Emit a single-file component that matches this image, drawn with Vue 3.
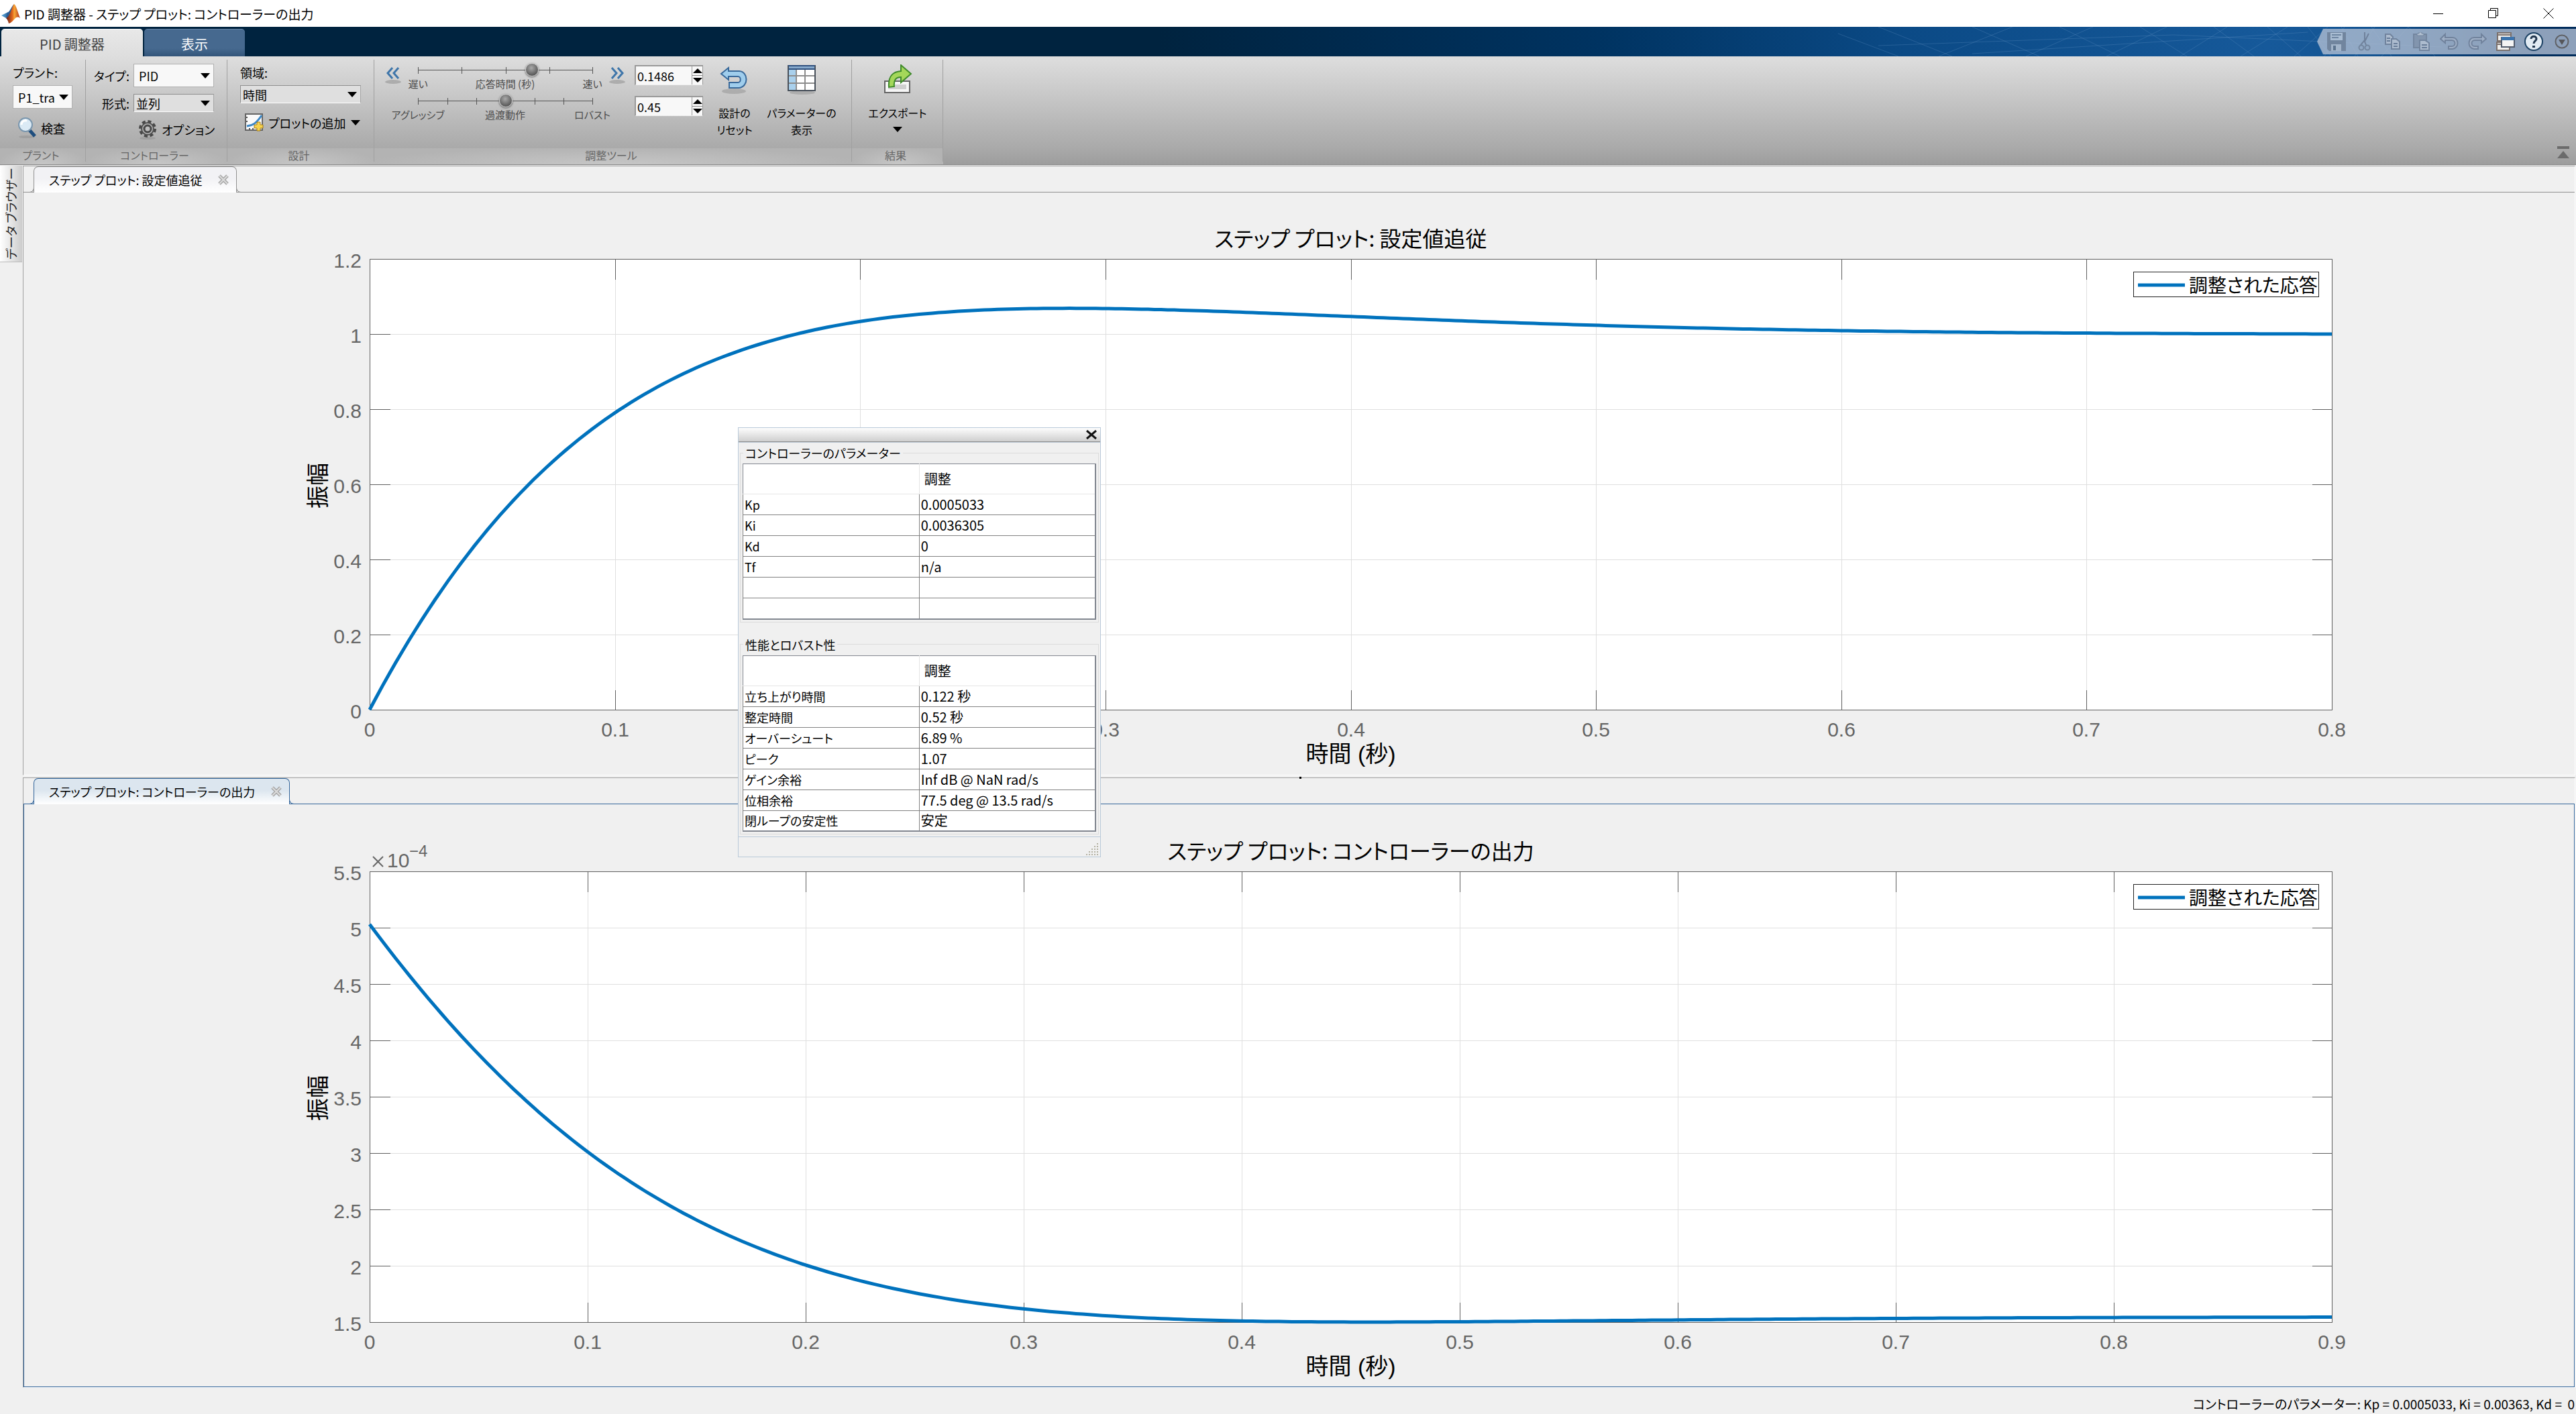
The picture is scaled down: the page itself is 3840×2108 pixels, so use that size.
<script setup>
import { ref } from 'vue'

const plant = ref('P1_tra')
const controllerType = ref('PID')
const form = ref('並列')
const domain = ref('時間')
const responseTime = ref('0.1486')
const transient = ref('0.45')
const responseSlider = ref(655)
const transientSlider = ref(502)

const gains = [
  ['Kp', '0.0005033'],
  ['Ki', '0.0036305'],
  ['Kd', '0'],
  ['Tf', 'n/a'],
  ['', ''],
  ['', '']
]
const performance = [
  ['立ち上がり時間', '0.122 秒'],
  ['整定時間', '0.52 秒'],
  ['オーバーシュート', '6.89 %'],
  ['ピーク', '1.07'],
  ['ゲイン余裕', 'Inf dB @ NaN rad/s'],
  ['位相余裕', '77.5 deg @ 13.5 rad/s'],
  ['閉ループの安定性', '安定']
]
const tables = [
  { title: 'コントローラーのパラメーター', rows: gains },
  { title: '性能とロバスト性', rows: performance }
]

// Closed loop of a first-order plant with the tuned PI controller
const sigma = 8.09
const wd = 4.89
const b = -0.877
const tau = 0.263
const uFinal = 1.545
const output = t => 1 - Math.exp(-sigma * t) * (Math.cos(wd * t) + b * Math.sin(wd * t))
const slope = t => Math.exp(-sigma * t) *
  ((sigma - b * wd) * Math.cos(wd * t) + (sigma * b + wd) * Math.sin(wd * t))
const control = t => (tau * slope(t) + output(t)) * uFinal

function makeChart(o) {
  const { left, right, top, bottom, xMax, yMin, yMax } = o
  const px = t => left + (right - left) * t / xMax
  const py = v => bottom - (bottom - top) * (v - yMin) / (yMax - yMin)
  const points = []
  for (let i = 0; i <= 300; i++) {
    const t = xMax * i / 300
    points.push(px(t).toFixed(1) + ',' + py(o.fn(t)).toFixed(1))
  }
  const xTicks = []
  for (let i = 0; i <= Math.round(xMax * 10); i++) {
    xTicks.push({ pos: Math.round(px(i / 10)), label: String(i / 10) })
  }
  const yTicks = []
  const n = Math.round((yMax - yMin) / o.yStep)
  for (let i = 0; i <= n; i++) {
    const v = Math.round((yMin + i * o.yStep) * 10) / 10
    yTicks.push({ pos: Math.round(py(v)), label: String(v) })
  }
  return { ...o, points: points.join(' '), xTicks, yTicks, mid: (left + right) / 2, midY: (top + bottom) / 2 }
}

const panels = [
  {
    tab: 'ステップ プロット: 設定値追従', active: false,
    chart: makeChart({ width: 3803, left: 516, right: 3441, top: 99, bottom: 771, xMax: 0.8, yMin: 0, yMax: 1.2, yStep: 0.2, fn: output, title: 'ステップ プロット: 設定値追従' })
  },
  {
    tab: 'ステップ プロット: コントローラーの出力', active: true,
    chart: makeChart({ width: 3801, left: 515, right: 3440, top: 100, bottom: 772, xMax: 0.9, yMin: 1.5, yMax: 5.5, yStep: 0.5, fn: control, title: 'ステップ プロット: コントローラーの出力', exponent: true })
  }
]
</script>

<template>
  <div class="app">
    <header class="titlebar">
      <svg class="logo" viewBox="0 0 28 30" aria-hidden="true">
        <defs>
          <linearGradient id="lg1" x1="0" x2="1"><stop offset="0" stop-color="#5aa9dd" /><stop offset="1" stop-color="#1f4f86" /></linearGradient>
          <linearGradient id="lg2" x1="0" x2="1"><stop offset="0" stop-color="#5b1a1a" /><stop offset=".45" stop-color="#e0661c" /><stop offset=".6" stop-color="#f7a637" /><stop offset="1" stop-color="#a82a16" /></linearGradient>
        </defs>
        <path d="M0 18L9 13.500L14 16.500L8 22.500Z" fill="url(#lg1)" />
        <path d="M9 13.500C13 13 15 4 19 1L15 14L10 21L7 20Z" fill="#2b5d96" />
        <path d="M19 1C22 2 25 15 28 22C25 20 23 20 20 23C17 26 15 29 11 30C10 26 9 24 7 22C13 20 15 6 19 1Z" fill="url(#lg2)" />
      </svg>
      <h1>PID 調整器 - ステップ プロット: コントローラーの出力</h1>
      <div class="window-buttons">
        <button aria-label="最小化"><svg viewBox="0 0 16 16"><path d="M0 8.500H15" stroke="#000" /></svg></button>
        <button aria-label="元に戻す"><svg viewBox="0 0 16 16"><path d="M.5 3.500H11.500V14.500H.5ZM3.500 3.500V.5H14.500V11.500H11.500" fill="none" stroke="#000" /></svg></button>
        <button aria-label="閉じる"><svg viewBox="0 0 16 16"><path d="M.5 .5L15.500 15.500M15.500 .5L.5 15.500" stroke="#000" /></svg></button>
      </div>
    </header>

    <nav class="tabstrip">
      <button class="tab current">PID 調整器</button>
      <button class="tab">表示</button>
      <svg class="mesh" viewBox="0 0 1100 44" preserveAspectRatio="xMaxYMid slice" aria-hidden="true">
        <path d="M0 10L90 44M60 0L170 44M150 44L260 0M200 0L300 44M280 44L380 0M330 0L420 44M400 44L490 0M450 0L520 44M510 44L580 0M560 0L620 44M600 44L670 0M640 0L690 44M680 44L730 0M700 0L735 44M725 44L755 0M750 0L775 44M770 44L800 0M795 0L825 44M810 44L850 0M850 0L890 44M60 28L500 12L900 30M200 40L700 8" fill="none" stroke="#6d9cc8" stroke-opacity=".28" />
      </svg>
      <div class="quick">
        <button disabled aria-label="保存"><svg viewBox="0 0 28 28"><path d="M0 0H28V28H3L0 25Z" fill="#71859e" /><path d="M5 1H23V12H5Z" fill="#a9bdd3" /><path d="M7 4H21M7 8H17" stroke="#6f86a2" stroke-width="2" /><path d="M6 18H21V28H6Z" fill="#a2b4c9" /><path d="M9 20H13V27H9Z" fill="#5d748f" /></svg></button>
        <button disabled aria-label="切り取り"><svg viewBox="0 0 28 28"><path d="M14 0V12L8 19M20 2L14 14L16 19" fill="none" stroke="#6f819b" stroke-width="2" /><circle cx="9" cy="23" r="3.500" fill="none" stroke="#73869f" stroke-width="2" /><circle cx="18" cy="23" r="3.500" fill="none" stroke="#73869f" stroke-width="2" /></svg></button>
        <button disabled aria-label="コピー"><svg viewBox="0 0 28 28"><g fill="#adbccf" stroke="#71849e" stroke-width="2"><path d="M3 3H10L14 7V18H3Z" /><path d="M12 10H19L24 14V25H12Z" /></g><path d="M5 9H10M5 13H10M15 17H21M15 21H21" stroke="#677c98" stroke-width="2" /></svg></button>
        <button disabled aria-label="貼り付け"><svg viewBox="0 0 28 28"><path d="M3 3H22V23H3Z" fill="#8295ae" stroke="#73869f" stroke-width="2" /><path d="M8 5V2H11V0H15V2H18V5Z" fill="#b3c1d2" stroke="#71849e" /><path d="M12 12H20L26 16V27H12Z" fill="#adbccf" stroke="#71849e" stroke-width="2" /><path d="M15 19H23M15 23H23" stroke="#677c98" stroke-width="2" /></svg></button>
        <button disabled aria-label="元に戻す"><svg viewBox="0 0 28 28"><path d="M8 3L1 10L8 16V12H18C24 12 24 21 18 21H13V25H19C29 24 29 8 19 8H8Z" fill="#a0b0c6" stroke="#71839d" stroke-width="2" /></svg></button>
        <button disabled aria-label="やり直し"><svg viewBox="0 0 28 28"><path d="M20 3L27 10L20 16V12H10C4 12 4 21 10 21H15V25H9C-1 24 -1 8 9 8H20Z" fill="#a0b0c6" stroke="#71839d" stroke-width="2" /></svg></button>
        <button aria-label="ウィンドウの切り替え"><svg viewBox="0 0 28 28"><path d="M2 1H22V13H2ZM1 15H20V27H1Z" fill="#f0efed" stroke="#7b716d" stroke-width="2" /><path d="M2 4H22M1 18H20" stroke="#7b716d" stroke-width="2" /><path d="M8 8H27V22H8Z" fill="#f4f4f4" stroke="#525c6c" stroke-width="2" /><path d="M8 7H27V12H8Z" fill="#3c74ad" /></svg></button>
        <button aria-label="ヘルプ"><svg viewBox="0 0 28 28"><circle cx="14" cy="14" r="13" fill="#e2ebf3" stroke="#1e4365" stroke-width="2" /><path d="M10 10C10 5 18 5 18 10C18 13 14 13 14 17" fill="none" stroke="#22374f" stroke-width="3" /><path d="M12 20H16V23H12Z" fill="#22374f" /></svg></button>
        <button aria-label="クイック アクセス"><svg viewBox="0 0 28 28"><circle cx="14" cy="14" r="9.500" fill="none" stroke="#5f6064" stroke-width="2" /><path d="M9 11H19L14 19Z" fill="#55565a" /></svg></button>
      </div>
    </nav>

    <div class="toolstrip">
      <section class="group plant">
        <div class="body stack">
          <label for="plant">プラント:</label>
          <div class="combo tall"><select id="plant" v-model="plant"><option>P1_tra</option></select></div>
          <button class="tool">
            <svg class="icon" viewBox="0 0 28 32"><ellipse cx="14" cy="29" rx="12" ry="2" fill="#888" opacity=".4" /><path d="M17 18L26 28" stroke="#1f4e7e" stroke-width="5" /><circle cx="12" cy="11" r="10" fill="#dbeaf5" stroke="#7b97ae" stroke-width="2" /><path d="M6 11C6 6 10 4 14 5" fill="none" stroke="#fff" stroke-width="3" /></svg>
            検査
          </button>
        </div>
        <h2>プラント</h2>
      </section>

      <section class="group controller">
        <div class="body fields">
          <label for="type">タイプ:</label>
          <div class="combo tall"><select id="type" v-model="controllerType"><option>PID</option></select></div>
          <label for="form">形式:</label>
          <div class="combo flat"><select id="form" v-model="form"><option>並列</option></select></div>
          <button class="tool wide">
            <svg class="icon" viewBox="0 0 28 32"><ellipse cx="14" cy="29" rx="12" ry="2" fill="#888" opacity=".4" /><circle cx="14" cy="15" r="11" fill="none" stroke="#484848" stroke-width="4" stroke-dasharray="5 3.640" /><circle cx="14" cy="15" r="9" fill="#b5b5b5" stroke="#505050" stroke-width="2" /><circle cx="14" cy="15" r="5" fill="#bdbdbd" stroke="#484848" stroke-width="3" /></svg>
            オプション
          </button>
        </div>
        <h2>コントローラー</h2>
      </section>

      <section class="group design">
        <div class="body stack">
          <label for="domain">領域:</label>
          <div class="combo flat"><select id="domain" v-model="domain"><option>時間</option></select></div>
          <button class="tool">
            <svg class="icon" viewBox="0 0 28 32"><path d="M1 3H26V27H1Z" fill="#fafafa" stroke="#666" stroke-width="2" /><path d="M3 21C12 20 17 17 25 5" fill="none" stroke="#3d88c6" stroke-width="3" /><path d="M2 8H4M2 14H4M7 26V24M12 26V24" stroke="#555" stroke-width="2" /><path d="M18 15H23V19H27V24H23V28H18V24H14V19H18Z" fill="#f6d34e" stroke="#a27b18" /></svg>
            プロットの追加 <i class="caret"></i>
          </button>
        </div>
        <h2>設計</h2>
      </section>

      <section class="group tuning">
        <div class="body row">
          <div class="sliders">
            <div class="slider-row">
              <button class="step" aria-label="遅くする"><svg viewBox="0 0 28 28"><ellipse cx="14" cy="23" rx="12" ry="3" fill="#777" opacity=".4" /><path d="M13 2L6 10L13 18M22 2L15 10L22 18" fill="none" stroke="#3f76aa" stroke-width="3" /></svg></button>
              <div class="slider">
                <div class="range">
                  <svg viewBox="0 0 281 24" class="scale"><path d="M10 12.500H271M10.500 8V18M75.500 8V18M141.500 8V18M206.500 8V18M270.500 8V18" /></svg>
                  <input v-model="responseSlider" type="range" min="0" max="1000" aria-label="応答時間 (秒)">
                </div>
                <div class="captions"><span>遅い</span><span>応答時間 (秒)</span><span>速い</span></div>
              </div>
              <button class="step" aria-label="速くする"><svg viewBox="0 0 28 28"><ellipse cx="14" cy="23" rx="12" ry="3" fill="#777" opacity=".4" /><path d="M6 2L13 10L6 18M15 2L22 10L15 18" fill="none" stroke="#3f76aa" stroke-width="3" /></svg></button>
            </div>
            <div class="slider">
              <div class="range">
                <svg viewBox="0 0 281 24" class="scale"><path d="M10 12.500H271M10.500 8V18M54.500 8V18M97.500 8V18M184.500 8V18M227.500 8V18M270.500 8V18" /></svg>
                <input v-model="transientSlider" type="range" min="0" max="1000" aria-label="過渡動作">
              </div>
              <div class="captions"><span>アグレッシブ</span><span>過渡動作</span><span>ロバスト</span></div>
            </div>
          </div>
          <div class="spinners">
            <div class="spinner">
              <input v-model="responseTime" type="text" aria-label="応答時間">
              <div class="arrows"><button aria-label="増やす"><i class="up"></i></button><button aria-label="減らす"><i class="down"></i></button></div>
            </div>
            <div class="spinner">
              <input v-model="transient" type="text" aria-label="過渡動作">
              <div class="arrows"><button aria-label="増やす"><i class="up"></i></button><button aria-label="減らす"><i class="down"></i></button></div>
            </div>
          </div>
          <button class="big reset">
            <svg viewBox="0 0 46 46"><ellipse cx="22" cy="40" rx="18" ry="4" fill="#777" opacity=".35" /><path d="M14 5L3 14L14 23V18H28C33 18 33 27 28 27H15V35H30C44 33 44 11 30 10H14Z" fill="#9fcdec" stroke="#39699a" stroke-width="2" /></svg>
            設計の<br>リセット
          </button>
          <button class="big params">
            <svg viewBox="0 0 46 46"><ellipse cx="24" cy="42" rx="19" ry="3" fill="#777" opacity=".35" /><path d="M4 2H42V39H4Z" fill="#fff" /><path d="M4 2H14V39H4Z" fill="#a9d0ec" /><path d="M4 17H42M4 28H42M15 7V39M28 7V39" stroke="#8d8d8d" stroke-width="2" /><path d="M4 2H42V7H4Z" fill="#86a9cc" /><path d="M3 2H43V39H3Z" fill="none" stroke="#48505a" stroke-width="2" /><path d="M3 2H43M3 7H43" stroke="#2f507e" stroke-width="2" /></svg>
            パラメーターの<br>表示
          </button>
        </div>
        <h2>調整ツール</h2>
      </section>

      <section class="group result">
        <div class="body row">
          <button class="big export">
            <svg viewBox="0 0 46 46"><path d="M4 25H41V42H4Z" fill="#f6f6f6" stroke="#666" stroke-width="2" /><path d="M9 30H36V37H9Z" fill="#cfcfcf" /><path d="M10 34C9 19 14 11 28 10V1L43 14L28 27V19C20 19 17 24 18 33Z" fill="#a4d75a" stroke="#3f8a2b" stroke-width="2" /></svg>
            エクスポート
            <i class="caret"></i>
          </button>
        </div>
        <h2>結果</h2>
      </section>
      <button class="collapse" aria-label="ツールストリップの最小化"><svg viewBox="0 0 18 18"><path d="M0 0H18V4H0ZM9 7L18 18H0Z" fill="#6b6b6b" /></svg></button>
    </div>

    <main class="workspace">
      <aside><button class="browser">データ ブラウザー</button></aside>
      <div class="documents">
        <section v-for="p in panels" :key="p.tab" class="panel" :class="{ active: p.active }">
          <div class="doc-tabs">
            <div class="doc-tab">
              <span>{{ p.tab }}</span>
              <button aria-label="閉じる"><svg viewBox="0 0 16 16"><path d="M2 2L14 14M14 2L2 14" stroke="#a6a6a6" stroke-width="5" /><path d="M2 2L14 14M14 2L2 14" stroke="#dcdcdc" stroke-width="2" /></svg></button>
            </div>
          </div>
          <div class="doc-body">
            <svg class="chart" :viewBox="`0 0 ${p.chart.width} 868`" role="img" :aria-label="p.chart.title">
              <rect :x="p.chart.left" :y="p.chart.top" :width="p.chart.right - p.chart.left" :height="p.chart.bottom - p.chart.top" fill="#fff" />
              <g transform="translate(0.5 0.5)" shape-rendering="crispEdges">
                <g class="grid">
                  <line v-for="t in p.chart.xTicks" :key="'x' + t.label" :x1="t.pos" :x2="t.pos" :y1="p.chart.top" :y2="p.chart.bottom" />
                  <line v-for="t in p.chart.yTicks" :key="'y' + t.label" :x1="p.chart.left" :x2="p.chart.right" :y1="t.pos" :y2="t.pos" />
                </g>
                <g class="axis">
                  <rect :x="p.chart.left" :y="p.chart.top" :width="p.chart.right - p.chart.left" :height="p.chart.bottom - p.chart.top" />
                  <path v-for="t in p.chart.xTicks" :key="'tx' + t.label" :d="`M${t.pos} ${p.chart.top}v30M${t.pos} ${p.chart.bottom}v-30`" />
                  <path v-for="t in p.chart.yTicks" :key="'ty' + t.label" :d="`M${p.chart.left} ${t.pos}h30M${p.chart.right} ${t.pos}h-30`" />
                </g>
              </g>
              <polyline class="curve" :points="p.chart.points" />
              <g class="ticks" text-anchor="middle">
                <text v-for="t in p.chart.xTicks" :key="t.label" :x="t.pos" :y="p.chart.bottom + 40">{{ t.label }}</text>
              </g>
              <g class="ticks" text-anchor="end">
                <text v-for="t in p.chart.yTicks" :key="t.label" :x="p.chart.left - 12" :y="t.pos + 13">{{ t.label }}</text>
              </g>
              <g v-if="p.chart.exponent" class="ticks">
                <path :d="`M${p.chart.left + 5} ${p.chart.top - 22}l15 15m0 -15l-15 15`" fill="none" stroke="#666" stroke-width="2" />
                <text :x="p.chart.left + 26" :y="p.chart.top - 6">10</text>
                <text class="power" :x="p.chart.left + 59" :y="p.chart.top - 22">−4</text>
              </g>
              <text class="name" text-anchor="middle" :x="p.chart.mid" :y="p.chart.top - 18">{{ p.chart.title }}</text>
              <g class="axis-name" text-anchor="middle">
                <text :x="p.chart.mid" :y="p.chart.bottom + 78">時間 (秒)</text>
                <text :transform="`translate(${p.chart.left - 65} ${p.chart.midY + 2}) rotate(-90)`">振幅</text>
              </g>
              <g :transform="`translate(${p.chart.right - 296} ${p.chart.top + 19})`">
                <rect x="0.5" y="0.5" width="276" height="37" fill="#fff" stroke="#222" />
                <path class="curve" d="M7 20H77" />
                <text class="legend" x="83" y="31">調整された応答</text>
              </g>
            </svg>
          </div>
        </section>
        <i class="splitter"></i>
      </div>

      <div class="dialog" role="dialog" aria-label="コントローラーのパラメーター">
        <div class="dialog-bar"><button aria-label="閉じる"><svg viewBox="0 0 16 14"><path d="M1 1L15 13M15 1L1 13" stroke="#111" stroke-width="3" /></svg></button></div>
        <div class="dialog-content">
          <fieldset v-for="t in tables" :key="t.title">
            <legend>{{ t.title }}</legend>
            <table>
              <thead><tr><th></th><th>調整</th></tr></thead>
              <tbody><tr v-for="(r, i) in t.rows" :key="i"><td>{{ r[0] }}</td><td>{{ r[1] }}</td></tr></tbody>
            </table>
          </fieldset>
        </div>
        <div class="dialog-foot"><svg viewBox="0 0 20 20"><path d="M16 2h2M12 6h6M8 10h10M4 14h14M0 18h18" stroke="#b5b3a4" stroke-width="2" stroke-dasharray="2 2" /></svg></div>
      </div>
    </main>

    <footer class="status">コントローラーのパラメーター: Kp = 0.0005033, Ki = 0.00363, Kd =&nbsp; 0</footer>
  </div>
</template>

<style>
body { background: #f0f0f0; }
</style>

<style scoped>
* { box-sizing: border-box; }
.app {
  display: flex; flex-direction: column; min-height: 100vh;
  background: #f0f0f0; color: #000;
  font-family: "Noto Sans CJK JP", sans-serif; font-size: 20px; line-height: 24px;
  font-feature-settings: "palt" 1;
}
button, input, select { font: inherit; font-feature-settings: inherit; color: inherit; border: 0; padding: 0; margin: 0; background: none; }
h1, h2 { margin: 0; font-weight: 400; font-size: inherit; }

.titlebar { display: flex; align-items: center; height: 40px; background: #fff; padding-left: 2px; }
.titlebar h1 { font-size: 19px; padding-top: 2px; }
.logo { width: 28px; height: 30px; margin-right: 6px; }
.window-buttons { margin-left: auto; display: flex; }
.window-buttons button { width: 82px; height: 38px; display: flex; align-items: center; justify-content: center; }
.window-buttons svg { width: 16px; height: 16px; }

.tabstrip { position: relative; display: flex; align-items: flex-end; height: 44px; padding-left: 2px; gap: 2px; background: linear-gradient(90deg, #00233f 0%, #00233f 45%, #003361 62%, #0b4a86 74%, #16599a 88%, #145492 92%, #002c5c 98%); }
.tab { height: 41px; width: 150px; border-radius: 5px 5px 0 0; background: linear-gradient(#46698f 70%, #33557a); border-top: 1px solid #6585a8; color: #fff; padding-top: 4px; }
.tab.current { width: 211px; background: linear-gradient(#e8e8e8, #dedede); color: #404040; border-top-color: #fff; }
.mesh { position: absolute; right: 0; top: 0; width: 1100px; height: 44px; pointer-events: none; }
.quick { position: relative; align-self: center; margin-left: auto; display: flex; align-items: center; height: 38px; gap: 14px; padding: 0 7px 0 15px; background: rgba(176, 190, 210, .8); clip-path: polygon(9px 0, 100% 0, 100% 100%, 9px 100%, 0 50%); }
.quick button, .quick svg { display: block; width: 28px; height: 28px; }

.toolstrip { display: flex; height: 162px; font-size: 18px; background: linear-gradient(#dedede, #aaa 84%, #9d9d9d); border-bottom: 1px solid #858585; position: relative; }
.group { display: flex; flex-direction: column; flex: none; position: relative; }
.group::after { content: ""; position: absolute; right: 0; top: 5px; bottom: 4px; width: 1px; background: #a0a0a0; }
.body { flex: 1; }
.group h2 { height: 24px; padding-right: 6px; font-size: 16px; line-height: 20px; text-align: center; color: #666; background: radial-gradient(ellipse at center bottom, #c6c6c6, #b3b3b3 75%); }
.plant { width: 128px; }
.controller { width: 211px; }
.design { width: 219px; }
.tuning { width: 712px; }
.result { width: 136px; }
.stack { display: flex; flex-direction: column; padding: 12px 20px 0 19px; }
.stack .combo { margin: 7px 0 13px; }
.fields { display: grid; grid-template-columns: 1fr 120px; grid-auto-rows: auto; align-items: center; align-content: start; padding: 11px 20px 0 6px; column-gap: 6px; row-gap: 10px; }
.fields label { text-align: right; }
.combo { position: relative; background: #f8f8f8; border: 1px solid #b0b0b0; }
.combo.tall { height: 35px; }
.combo.flat { height: 27px; background: #dfdfdf; border-color: #8f8f8f #a5a5a5 #fff #8f8f8f; }
.combo select { appearance: none; width: 100%; height: 100%; padding-left: 7px; line-height: 24px; }
.combo.flat select { padding-left: 3px; }
.combo::after { content: ""; position: absolute; right: 5px; top: 50%; margin-top: -4px; border: solid transparent; border-width: 8px 7px 0; border-top-color: #000; pointer-events: none; }
.tool { display: flex; align-items: center; gap: 7px; height: 32px; padding-left: 7px; white-space: nowrap; }
.tool.wide { grid-column: 2; }
.icon { width: 28px; height: 32px; flex: none; }
.caret { display: inline-block; border: solid transparent; border-width: 8px 7px 0; border-top-color: #000; }
.row { display: flex; align-items: flex-start; }
.tuning .row { padding-left: 14px; }
.sliders { width: 362px; padding-top: 8px; font-size: 15px; line-height: 18px; color: #4c4c4c; display: flex; flex-direction: column; align-items: center; gap: 4px; }
.slider-row { display: flex; align-items: center; justify-content: space-between; width: 100%; }
.step, .step svg { display: block; width: 28px; height: 28px; }
.slider { display: flex; flex-direction: column; align-items: center; width: 306px; }
.range { position: relative; width: 281px; height: 24px; }
.scale { position: absolute; inset: 0; width: 281px; height: 24px; fill: none; stroke: #555; }
.range input { appearance: none; position: relative; display: block; width: 281px; height: 24px; }
.range input::-webkit-slider-runnable-track { height: 24px; }
.range input::-webkit-slider-thumb { appearance: none; width: 20px; height: 20px; margin-top: 2px; border-radius: 10px; background: radial-gradient(circle at 45% 35%, #aaa, #555 75%); border: 1px solid #ccc; box-shadow: 0 1px 3px #555; }
.captions { display: grid; grid-template-columns: 130px 130px 130px; text-align: center; white-space: nowrap; }
.spinners { display: flex; flex-direction: column; gap: 16px; margin: 13px 0 0 12px; }
.spinner { display: flex; width: 102px; height: 30px; background: #f8f8f8; border: solid #999; border-width: 2px 1px 1px 2px; border-bottom-color: #eee; }
.spinner input { flex: 1; min-width: 0; padding-left: 2px; }
.arrows { width: 16px; display: flex; flex-direction: column; border-left: 1px solid #999; }
.arrows button { flex: 1; display: flex; align-items: center; justify-content: center; }
.arrows button + button { border-top: 1px solid #888; }
.up, .down { border: solid transparent; }
.up { border-width: 0 7px 7px; border-bottom-color: #000; }
.down { border-width: 7px 7px 0; border-top-color: #000; }
.big { display: block; text-align: center; font-size: 16px; line-height: 25px; padding-top: 12px; white-space: nowrap; }
.big svg { display: block; width: 46px; height: 46px; margin: 0 auto 14px; }
.big .caret { display: block; width: 14px; margin: 8px auto 0; }
.reset { width: 94px; }
.params { width: 106px; }
.export { width: 136px; }
.collapse { margin: auto 10px 9px auto; width: 18px; height: 18px; }
.collapse svg { display: block; }

.workspace { position: relative; display: flex; align-items: flex-start; padding: 1px 1px 0 0; }
aside { width: 34px; flex: none; }
.browser { width: 33px; height: 144px; writing-mode: vertical-rl; transform: rotate(180deg); background: linear-gradient(90deg, #ccc, #fff); border-top: 1px solid #bbb; font-size: 18px; color: #222; line-height: 33px; text-orientation: sideways; white-space: nowrap; }
.documents { flex: 1; min-width: 0; display: flex; flex-direction: column; gap: 3px; position: relative; }
.panel { border-top: 1px solid #a0a0a0; border-left: 1px solid #a0a0a0; border-right: 1px solid #fff; border-bottom: 1px solid #fff; }
.doc-tabs { display: flex; align-items: flex-end; height: 38px; padding-left: 15px; font-size: 18px; }
.doc-tab { --line: #919191; position: relative; display: flex; align-items: center; gap: 24px; height: 39px; margin-bottom: -1px; padding: 0 11px 0 22px; background: linear-gradient(#f2f2f5 45%, #fff); border: 1px solid var(--line); border-bottom: 0; border-radius: 7px 7px 0 0; z-index: 1; white-space: nowrap; }
.doc-tab::before, .doc-tab::after { content: ""; position: absolute; bottom: 0; width: 7px; height: 7px; border-bottom: 1px solid var(--line); background: #f0f0f0; }
.doc-tab::before { right: 100%; border-right: 1px solid var(--line); border-bottom-right-radius: 7px; }
.doc-tab::after { left: 100%; border-left: 1px solid var(--line); border-bottom-left-radius: 7px; }
.doc-tab button, .doc-tab svg { display: block; width: 16px; height: 16px; }
.doc-body { border-top: 1px solid #919191; }
.active .doc-tab { --line: #31649a; background: linear-gradient(#dce6ef 45%, #fff); }
.active .doc-body { border: 1px solid #31649a; }
.chart { display: block; width: 100%; height: auto; }
.grid { stroke: #dfdfdf; }
.axis { fill: none; stroke: #5f5f5f; }
.curve { fill: none; stroke: #0072bd; stroke-width: 5; stroke-linejoin: round; }
.ticks { font-family: "Liberation Sans", sans-serif; font-size: 30px; fill: #666; }
.power { font-size: 24px; }
.name { font-size: 32px; }
.axis-name { font-family: "Liberation Sans", "Noto Sans CJK JP", sans-serif; font-size: 34px; }
.legend { font-size: 28px; }
.splitter { position: absolute; left: 50%; top: 50%; width: 3px; height: 3px; background: #000; }

.dialog { position: absolute; z-index: 2; left: 1100px; top: 391px; width: 541px; border: 1px solid #b9c9d9; background: #f0f0f0; }
.dialog-bar { display: flex; justify-content: flex-end; align-items: center; height: 21px; padding-right: 5px; background: linear-gradient(#fdfdfd, #cfcfcf); border-bottom: 1px solid #8a8a8a; }
.dialog-bar button, .dialog-bar svg { display: block; width: 16px; height: 14px; }
.dialog-content { display: flex; flex-direction: column; gap: 21px; padding: 3px 2px 3px; border-top: 1px solid #c3d0dd; }
fieldset { margin: 0; min-width: 0; padding: 4px 3px 3px; border: 1px solid #dcdcdc; }
legend { padding: 0 3px; margin-left: 1px; font-size: 18px; line-height: 24px; }
table { width: 100%; border-collapse: collapse; table-layout: fixed; background: #fff; border: solid #828790; border-width: 1px 2px 2px 1px; }
th { height: 45px; padding: 0 7px; font-weight: 400; text-align: left; border-right: 1px solid #e5e5e5; border-bottom: 1px solid #e5e5e5; }
td { height: 31px; padding: 0 2px; line-height: 24px; border: 1px solid #828282; white-space: nowrap; }
td:first-child { font-size: 18px; }
tbody tr:first-child td { border-top-color: #e5e5e5; }
.dialog-foot { display: flex; justify-content: flex-end; align-items: flex-end; height: 30px; padding: 0 1px 1px; border-top: 1px solid #b9c9d9; }
.dialog-foot svg { width: 20px; height: 20px; }

.status { margin-top: auto; height: 39px; padding: 12px 2px 0 0; text-align: right; font-size: 19px; white-space: nowrap; }
</style>
